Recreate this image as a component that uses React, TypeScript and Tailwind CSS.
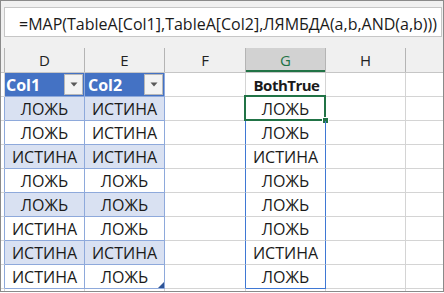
import React from "react";

type Row = { d: string; e: string; g: string; band: boolean };

const rows: Row[] = [
  { d: "ЛОЖЬ", e: "ИСТИНА", g: "ЛОЖЬ", band: true },
  { d: "ЛОЖЬ", e: "ИСТИНА", g: "ЛОЖЬ", band: false },
  { d: "ИСТИНА", e: "ИСТИНА", g: "ИСТИНА", band: true },
  { d: "ЛОЖЬ", e: "ЛОЖЬ", g: "ЛОЖЬ", band: false },
  { d: "ЛОЖЬ", e: "ЛОЖЬ", g: "ЛОЖЬ", band: true },
  { d: "ИСТИНА", e: "ЛОЖЬ", g: "ЛОЖЬ", band: false },
  { d: "ИСТИНА", e: "ИСТИНА", g: "ИСТИНА", band: true },
  { d: "ИСТИНА", e: "ЛОЖЬ", g: "ЛОЖЬ", band: false },
];

function FilterBtn() {
  return (
    <div className="absolute right-[1px] top-[1px] w-[19px] h-[21px] bg-[#f3f3f3] border border-[#b8b8b8] flex items-center justify-center">
      <svg width="8" height="5" viewBox="0 0 8 5">
        <polygon points="0.5,0.5 7.5,0.5 4,4.5" fill="#595959" />
      </svg>
    </div>
  );
}

export default function App() {
  return (
    <div className="w-[444px] h-[292px] border border-[#8a8a8a] bg-[#f0f0f0] flex flex-col overflow-hidden font-['Open_Sans',sans-serif] text-[#1a1a1a]">
      {/* formula bar */}
      <div className="mt-[6px] mb-[11px] ml-[3px] mr-[1px] h-[30px] bg-white border border-[#c6c6c6] flex items-center pl-[14px] pt-[3px] text-[16px] whitespace-nowrap">
        =MAP(TableA[Col1],TableA[Col2],ЛЯМБДА(a,b,AND(a,b)))
      </div>

      {/* column headers */}
      <div className="flex h-[25px] border-b border-[#c6c6c6] text-[15px] text-[#222]">
        <div className="w-[4px] border-r border-[#b4b4b4]" />
        <div className="w-[80px] border-r border-[#b4b4b4] flex items-center justify-center">D</div>
        <div className="w-[80px] border-r border-[#b4b4b4] flex items-center justify-center">E</div>
        <div className="w-[81px] border-r border-[#b4b4b4] flex items-center justify-center">F</div>
        <div className="w-[80px] border-r border-[#b4b4b4] bg-[#d2d2d2] flex items-center justify-center text-[#217346] relative">
          G
          <div className="absolute left-0 right-0 bottom-0 h-[2px] bg-[#217346]" />
        </div>
        <div className="w-[80px] border-r border-[#b4b4b4] flex items-center justify-center">H</div>
        <div className="flex-1" />
      </div>

      {/* table header row */}
      <div className="flex h-[24px] bg-white text-[16px]">
        <div className="w-[4px] border-r border-b border-[#d4d4d4]" />
        <div className="w-[80px] border-r border-b border-[#8ea9db] bg-[#4472c4] text-white font-bold flex items-center pl-[1px] relative">
          Col1
          <FilterBtn />
        </div>
        <div className="w-[80px] border-r border-b border-[#8ea9db] bg-[#4472c4] text-white font-bold flex items-center pl-[3px] relative">
          Col2
          <FilterBtn />
        </div>
        <div className="w-[81px] border-r border-b border-[#d4d4d4]" />
        <div className="w-[80px] border-r border-b border-r-[#d4d4d4] border-b-[#3f78d4] font-bold text-[15px] tracking-[-0.5px] flex items-center justify-center pt-[1px] pl-[2px]">
          BothTrue
        </div>
        <div className="w-[80px] border-r border-b border-[#d4d4d4]" />
        <div className="flex-1 border-b border-[#d4d4d4]" />
      </div>

      {rows.map((r, i) => {
        const last = i === rows.length - 1;
        const bg = r.band ? "bg-[#d9e1f2]" : "bg-white";
        return (
          <div key={i} className="flex h-[24px] bg-white text-[16px]">
            <div className="w-[4px] border-r border-b border-r-[#8ea9db] border-b-[#d4d4d4]" />
            <div className={`w-[80px] border-r border-b border-[#8ea9db] ${bg} flex items-center justify-center pt-[1px]`}>
              {r.d}
            </div>
            <div className={`w-[80px] border-r border-b border-[#8ea9db] ${bg} flex items-center justify-center pt-[1px] relative`}>
              {r.e}
              {last && (
                <svg className="absolute right-0 bottom-0" width="6" height="6" viewBox="0 0 6 6">
                  <polygon points="6,0 6,6 0,6" fill="#2f5597" />
                </svg>
              )}
            </div>
            <div className="w-[81px] border-r border-b border-r-[#3f78d4] border-b-[#d4d4d4]" />
            <div
              className={`w-[80px] border-r border-b border-r-[#3f78d4] ${
                last ? "border-b-[#3f78d4]" : "border-b-[#d4d4d4]"
              } flex items-center justify-center pt-[1px] relative`}
            >
              {r.g}
              {i === 0 && (
                <>
                  <div className="absolute left-[-2px] top-[-2px] w-[82px] h-[26px] border-2 border-[#217346]" />
                  <div className="absolute left-[76px] top-[20px] w-[7px] h-[7px] bg-[#217346] border border-white" />
                </>
              )}
            </div>
            <div className="w-[80px] border-r border-b border-[#d4d4d4]" />
            <div className="flex-1 border-b border-[#d4d4d4]" />
          </div>
        );
      })}

      <div className="flex flex-1 bg-white">
        <div className="w-[4px] border-r border-[#d4d4d4]" />
        <div className="w-[80px] border-r border-[#d4d4d4]" />
        <div className="w-[80px] border-r border-[#d4d4d4]" />
        <div className="w-[81px] border-r border-[#d4d4d4]" />
        <div className="w-[80px] border-r border-[#d4d4d4]" />
        <div className="w-[80px] border-r border-[#d4d4d4]" />
        <div className="flex-1" />
      </div>
    </div>
  );
}
